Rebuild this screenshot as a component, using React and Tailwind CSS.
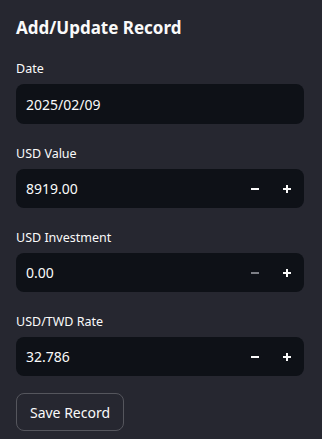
import React from "react";

const font = { fontFamily: '"Noto Sans", "Open Sans", sans-serif' };

function Minus({ disabled }) {
  return (
    <svg width="10" height="10" viewBox="0 0 10 10" className={disabled ? "text-[#7d7f86]" : "text-[#fafafa]"}>
      <rect x="1" y="4" width="8" height="2" fill="currentColor" />
    </svg>
  );
}

function Plus() {
  return (
    <svg width="10" height="10" viewBox="0 0 10 10" className="text-[#fafafa]">
      <rect x="1" y="4" width="8" height="2" fill="currentColor" />
      <rect x="4" y="1" width="2" height="8" fill="currentColor" />
    </svg>
  );
}

function Label({ children }) {
  return <div className="h-5 mb-[5px] text-[12.5px] leading-5 text-[#fafafa]">{children}</div>;
}

function NumberField({ label, value, minusDisabled }) {
  return (
    <div className="mt-5">
      <Label>{label}</Label>
      <div className="h-[39px] rounded-lg bg-[#0e1117] flex items-center pr-px">
        <div className="flex-1 pl-[10px] text-[14px] text-[#fafafa]">{value}</div>
        <div className="w-8 h-full flex items-center justify-center"><Minus disabled={minusDisabled} /></div>
        <div className="w-8 h-full flex items-center justify-center"><Plus /></div>
      </div>
    </div>
  );
}

export default function App() {
  return (
    <div style={font} className="w-[322px] h-[439px] bg-[#262730] pl-4 pr-[18px] pt-[14px] text-[#fafafa] overflow-hidden">
      <div className="text-[17px] leading-[28px] font-bold mb-[17px]">Add/Update Record</div>
      <div>
        <Label>Date</Label>
        <div className="h-10 rounded-lg bg-[#0e1117] flex items-center pl-[10px] text-[14px]">2025/02/09</div>
      </div>
      <NumberField label="USD Value" value="8919.00" />
      <NumberField label="USD Investment" value="0.00" minusDisabled />
      <NumberField label="USD/TWD Rate" value="32.786" />
      <button className="mt-[17px] h-[38px] w-[108px] rounded-lg border border-[#55565d] text-[14px] text-[#fafafa] flex items-center justify-center">
        Save Record
      </button>
    </div>
  );
}
